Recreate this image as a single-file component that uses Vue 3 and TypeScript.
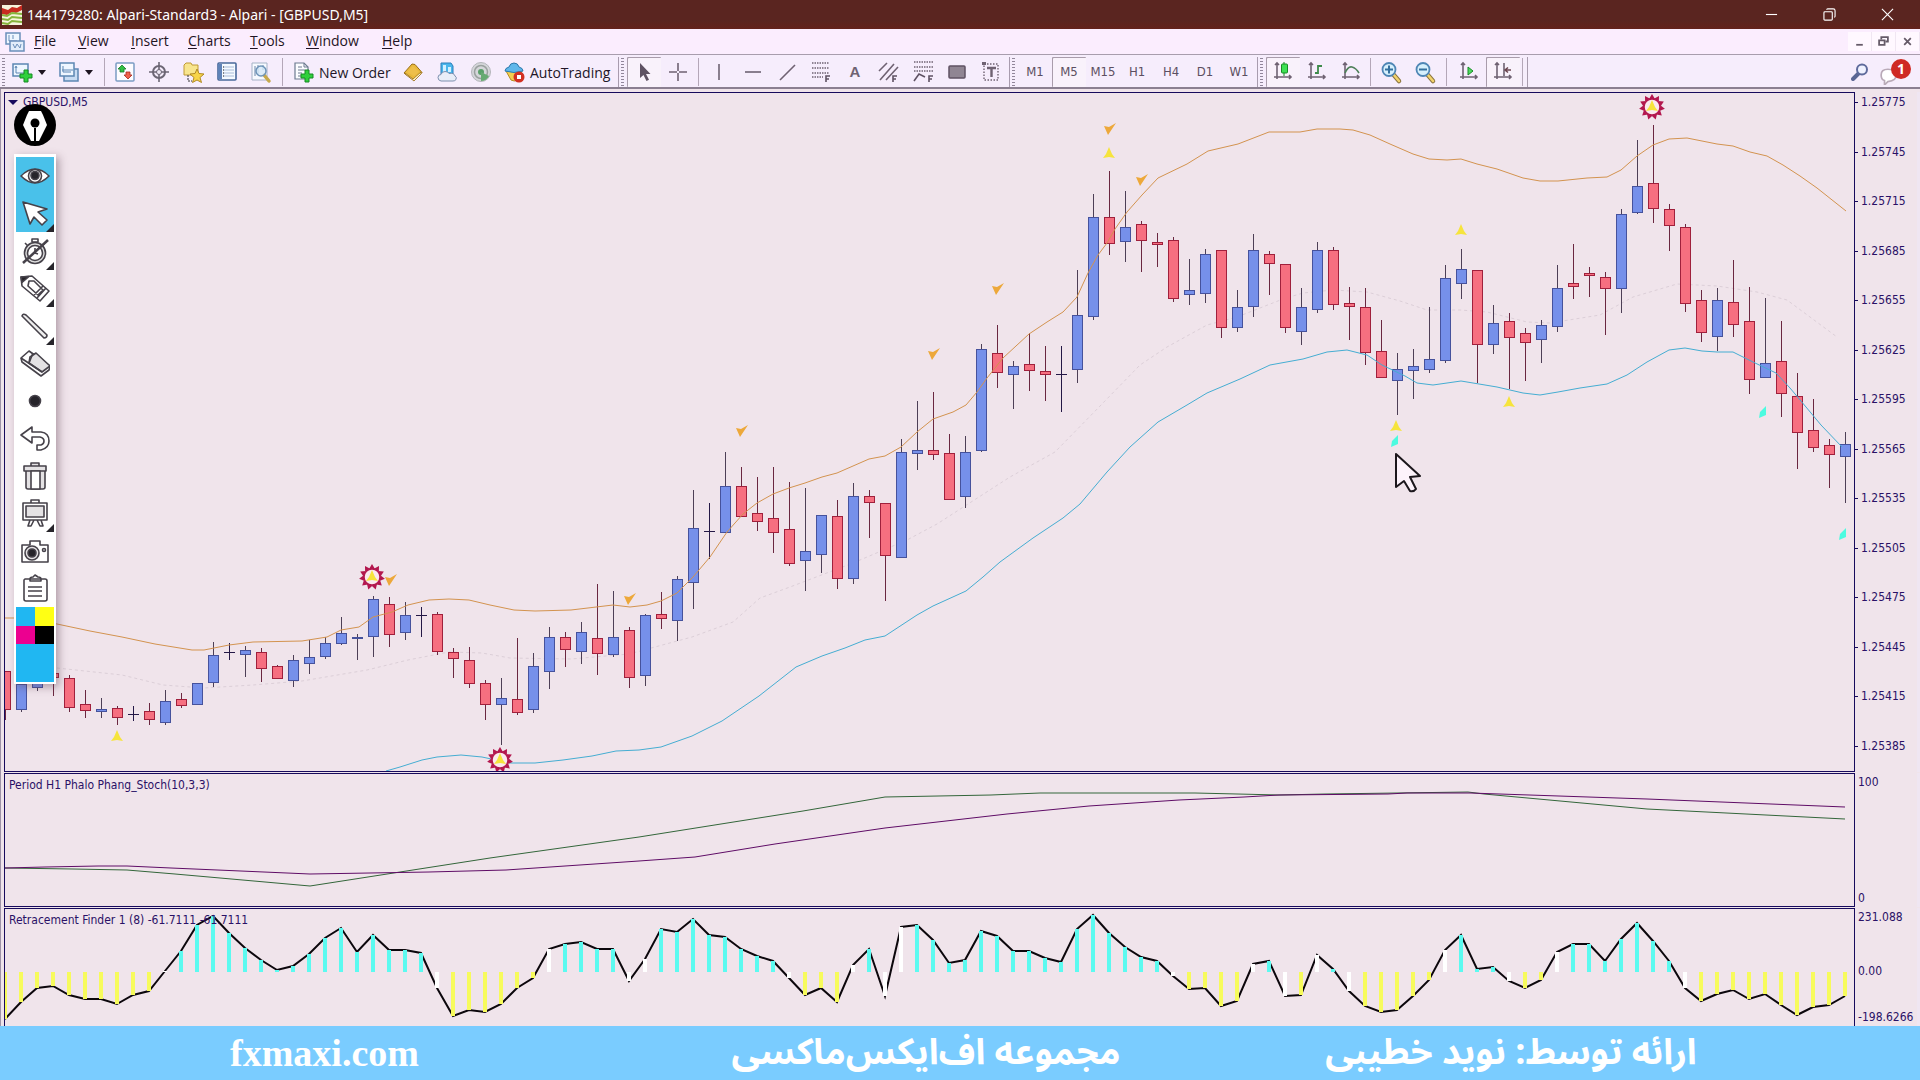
<script setup lang="ts">
interface Candle { x: number; up: boolean; top: number; bottom: number; high: number; low: number; doji: boolean }
interface Tool { id: string; svg?: string; text?: string; label?: string; kind?: 'sep' | 'end' | 'grip'; on?: boolean; cls?: string; drop?: boolean }

const STEP = 16
const ZERO = 972

// up flag, body top, body bottom, high, low
const rawCandles: [number, number, number, number, number][] = [
  [0, 671, 709, 671, 719], [1, 684, 709, 680, 711], [1, 680, 687, 676, 690], [0, 673, 677, 673, 695], [0, 678, 707, 675, 711],
  [0, 704, 710, 690, 717], [1, 709, 711, 698, 717], [0, 708, 717, 706, 724], [1, 714, 714, 706, 720], [0, 711, 719, 703, 724],
  [1, 701, 722, 690, 724], [0, 699, 705, 693, 707], [1, 683, 704, 683, 704], [1, 655, 682, 642, 686], [1, 652, 652, 643, 659],
  [1, 650, 654, 646, 676], [0, 652, 668, 648, 681], [0, 666, 678, 665, 678], [1, 660, 680, 655, 686], [1, 657, 663, 640, 673],
  [1, 643, 656, 637, 658], [1, 633, 643, 617, 644], [1, 637, 638, 634, 659], [1, 599, 636, 596, 656], [0, 604, 634, 597, 646],
  [1, 615, 632, 602, 639], [1, 615, 615, 607, 636], [0, 614, 651, 612, 654], [0, 652, 658, 648, 677], [0, 660, 683, 647, 687],
  [0, 683, 704, 680, 719], [1, 698, 704, 678, 744], [0, 699, 712, 638, 714], [1, 666, 709, 653, 712], [1, 637, 671, 627, 688],
  [0, 637, 649, 632, 666], [1, 632, 651, 622, 663], [0, 638, 653, 584, 674], [1, 637, 654, 591, 656], [0, 630, 677, 627, 687],
  [1, 615, 675, 614, 685], [0, 614, 618, 592, 628], [1, 579, 620, 576, 640], [1, 528, 582, 490, 608], [1, 531, 531, 503, 558],
  [1, 486, 532, 452, 532], [0, 486, 516, 467, 516], [0, 513, 521, 477, 530], [0, 518, 532, 467, 552], [0, 529, 563, 482, 565],
  [1, 551, 560, 488, 590], [1, 515, 554, 515, 572], [0, 516, 578, 500, 588], [1, 496, 578, 483, 583], [0, 496, 502, 490, 537],
  [0, 503, 555, 503, 600], [1, 452, 557, 439, 557], [1, 450, 453, 401, 469], [0, 450, 454, 392, 459], [0, 453, 499, 434, 499],
  [1, 452, 496, 436, 507], [1, 349, 450, 344, 451], [0, 353, 372, 325, 387], [1, 366, 374, 361, 408], [0, 364, 370, 333, 390],
  [0, 371, 374, 346, 400], [1, 374, 374, 346, 411], [1, 315, 369, 270, 382], [1, 217, 316, 194, 319], [0, 217, 243, 171, 254],
  [1, 227, 241, 191, 261], [0, 224, 240, 221, 271], [0, 242, 244, 233, 266], [0, 240, 298, 237, 301], [1, 290, 294, 259, 304],
  [1, 254, 293, 249, 302], [0, 250, 327, 250, 337], [1, 307, 327, 290, 331], [1, 250, 306, 234, 316], [0, 254, 263, 251, 294],
  [0, 264, 327, 264, 332], [1, 307, 331, 288, 344], [1, 250, 309, 242, 312], [0, 250, 304, 247, 309], [0, 303, 306, 287, 339],
  [0, 307, 352, 288, 364], [0, 351, 377, 320, 377], [1, 369, 380, 353, 414], [1, 366, 370, 349, 398], [1, 359, 369, 307, 372],
  [1, 278, 360, 265, 362], [1, 269, 283, 249, 298], [0, 270, 344, 270, 382], [1, 323, 344, 305, 353], [0, 321, 337, 313, 388],
  [0, 333, 342, 328, 380], [1, 325, 339, 320, 362], [1, 288, 326, 265, 331], [0, 283, 286, 244, 298], [0, 273, 275, 267, 296],
  [0, 277, 288, 272, 334], [1, 214, 288, 209, 312], [1, 186, 212, 140, 213], [0, 183, 208, 125, 222], [0, 209, 225, 204, 250],
  [0, 227, 303, 224, 311], [0, 300, 332, 290, 341], [1, 300, 336, 288, 350], [0, 302, 324, 260, 336], [0, 321, 379, 287, 393],
  [1, 363, 377, 298, 377], [0, 361, 393, 321, 416], [0, 396, 432, 373, 468], [0, 430, 447, 399, 451], [0, 445, 454, 439, 487],
  [1, 444, 456, 432, 502],
]
const candles: Candle[] = rawCandles.map(([up, top, bottom, high, low], i) => ({
  x: 5 + i * STEP, up: up === 1, top, bottom, high, low, doji: top === bottom,
}))

const upperBand = '5,618 27,618 57,624 90,631 122,637 155,644 192,650 204,650 229,645 253,642 302,641 327,637 341,630 359,627 373,617 392,612 408,605 429,600 449,599 469,600 490,605 514,610 535,611 571,610 613,605 630,607 647,605 661,601 677,593 693,577 710,557 727,532 743,514 757,503 773,494 789,488 805,483 822,477 837,473 869,459 885,456 901,447 917,432 933,419 953,412 966,405 977,392 987,378 1003,358 1029,334 1047,322 1063,312 1077,297 1088,273 1098,255 1107,243 1115,229 1127,212 1142,195 1158,178 1187,164 1208,151 1238,144 1269,132 1300,132 1317,129 1340,129 1353,130 1370,135 1390,144 1413,154 1429,159 1447,160 1461,159 1477,164 1497,169 1523,178 1540,181 1558,181 1587,178 1607,177 1621,170 1637,156 1653,145 1669,139 1687,138 1717,144 1733,146 1750,152 1767,156 1783,165 1800,176 1817,188 1846,211'
const lowerBand = '386,771 400,767 422,760 437,757 461,755 482,757 510,763 535,763 563,760 592,756 616,751 639,750 661,747 692,736 722,721 759,696 796,667 822,656 845,648 865,640 885,636 917,615 933,606 966,591 983,577 1000,562 1033,538 1063,518 1080,504 1107,472 1130,447 1158,422 1187,405 1207,393 1240,379 1270,365 1303,359 1327,352 1347,350 1367,355 1382,365 1405,376 1417,383 1433,385 1461,381 1497,387 1523,393 1540,395 1558,392 1580,388 1607,384 1627,375 1647,362 1669,350 1685,348 1702,351 1717,352 1733,352 1753,362 1776,373 1790,388 1806,407 1821,425 1842,447'
const middleBand = '57,668 122,675 163,685 204,688 253,685 302,681 367,670 408,660 449,652 482,653 510,658 571,659 629,654 692,637 733,622 760,598 790,587 853,563 907,540 937,524 1010,477 1055,452 1103,403 1140,365 1167,347 1207,325 1237,317 1283,299 1303,293 1333,290 1367,292 1400,301 1427,310 1460,310 1487,312 1527,322 1550,323 1600,315 1633,297 1677,284 1717,286 1757,292 1787,300 1837,337'
const stochMain = '5,868 73,869 127,870 175,874 310,886 400,872 490,858 639,837 803,811 885,797 991,795 1040,793 1195,793 1279,795 1325,794 1468,792 1484,794 1647,809 1845,819'
const stochSignal = '5,868 45,867 98,866 127,866 171,868 310,874 429,872 506,870 639,861 695,857 775,844 885,828 1007,814 1089,806 1179,800 1244,797 1279,795 1388,794 1407,793 1470,793 1647,799 1845,807'

const retrace = [
  1019, 1002, 988, 986, 995, 999, 999, 1004, 995, 991, 971, 951, 925, 916, 933, 948, 960, 970, 966, 954, 938, 928, 952, 935, 950,
  950, 953, 988, 1016, 1010, 1012, 1004, 988, 978, 949, 944, 942, 949, 949, 981, 959, 929, 932, 919, 935, 937, 949, 956, 961, 978,
  995, 988, 1002, 965, 949, 996, 927, 925, 940, 963, 960, 931, 936, 951, 951, 958, 962, 929, 915, 933, 947, 957, 961, 976, 989,
  988, 1006, 1001, 964, 961, 996, 995, 955, 969, 991, 1006, 1012, 1010, 996, 980, 950, 935, 969, 967, 981, 988, 980, 952, 944, 944,
  961, 939, 923, 941, 961, 988, 1001, 994, 990, 999, 994, 1005, 1015, 1007, 1005, 996,
]
const retraceLine = retrace.map((y, i) => `${5 + i * STEP},${y}`).join(' ')
const retraceBars = retrace.map((y, i) => {
  const above = y < ZERO
  const turned = i > 0 && (retrace[i - 1] < ZERO) !== above
  return { x: 3 + i * STEP, y: Math.min(y, ZERO), h: Math.abs(y - ZERO), cls: turned ? 'turn' : above ? 'pos' : 'neg' }
})

const prices = Array.from({ length: 14 }, (_, i) => (1.25775 - i * 0.0003).toFixed(5))
const yellowMarks = [[117, 736], [372, 576], [500, 759], [1109, 153], [1461, 230], [1652, 106], [1396, 426], [1509, 402]]
const orangeMarks = [[390, 580], [629, 599], [741, 431], [933, 354], [997, 289], [1109, 129], [1141, 180]]
const cyanMarks = [[1395, 441], [1763, 412], [1843, 534]]
const stars = [[372, 577], [500, 760], [1652, 107]]
const spikes = Array.from({ length: 11 }, (_, i) => (i * 360) / 11)

const menus = ['File', 'View', 'Insert', 'Charts', 'Tools', 'Window', 'Help']

const axes = '<path d="M4 1v16M1 15h17M2 3l2-2 2 2M16 13l2 2-2 2" fill="none" stroke="#6f6272" stroke-width="1.6"/>'
const plus = '<path d="M12 8h4v4h4v4h-4v4h-4v-4H8v-4h4z" fill="#2fd03c" stroke="#178a25" stroke-width="1"/>'
const lens = (sign: string) => `<path d="M12 12l6 7" stroke="#8a7440" stroke-width="4.5" stroke-linecap="round"/><path d="M12.500 12.500l5.500 6.500" stroke="#f3d36b" stroke-width="2.500" stroke-linecap="round"/><circle cx="8" cy="7.500" r="6.500" fill="#d6f0fc" stroke="#4f86b5" stroke-width="1.800"/><path d="${sign}" stroke="#34719f" stroke-width="2"/>`

const tools: Tool[] = [
  { id: 'g1', kind: 'grip' },
  { id: 'new', label: 'New chart', drop: true, cls: 'drop', svg: '<path d="M1 2h15v12H1z" fill="#eef6ff" stroke="#5c86b3" stroke-width="1.500"/><path d="M4 5v6h8M3 6l1-2 1 2" fill="none" stroke="#5c86b3"/>' + plus },
  { id: 'prof', label: 'Profiles', drop: true, cls: 'drop', svg: '<path d="M5 7h14v12H5z" fill="#c8dcf3" stroke="#5c86b3" stroke-width="1.500"/><path d="M1 1h14v13H1z" fill="#eef6ff" stroke="#5c86b3" stroke-width="1.500"/><path d="M4 4v6h8M3 8h11" fill="none" stroke="#5c86b3"/>' },
  { id: 's1', kind: 'sep', cls: 'near' },
  { id: 'mw', label: 'Market Watch', svg: '<rect x="1" y="1" width="18" height="18" rx="1" fill="#fdfcff" stroke="#7b9cc4" stroke-width="1.500"/><path d="M7 3l4 4H9v3H5V7H3z" fill="#30c043" stroke="#18792a" stroke-width=".8"/><path d="M13 17l4-4h-2v-3h-4v3H9z" fill="#f0604a" stroke="#a82a1c" stroke-width=".8"/>' },
  { id: 'dw', label: 'Data Window', svg: '<circle cx="10" cy="10" r="6" fill="none" stroke="#6c6674" stroke-width="2"/><path d="M10 0v20M0 10h20" stroke="#6c6674" stroke-width="1.600"/><circle cx="10" cy="10" r="2.500" fill="#efe8f4" stroke="#6c6674"/>' },
  { id: 'nav', label: 'Navigator', svg: '<path d="M1 3l2-2h5l1 2h6v10H1z" fill="#f8e58e" stroke="#c09a35"/><path d="M5 13v6h4" fill="none" stroke="#333" stroke-dasharray="2 1"/><path d="M14 7l2 4.500 5 .5-4 3.500 1.500 5L14 18l-4.500 2.500 1.500-5L7 12l5-.5z" fill="#f7d449" stroke="#b18a24"/>' },
  { id: 'term', label: 'Terminal', svg: '<rect x="1" y="1" width="18" height="17" rx="1" fill="#f5faff" stroke="#49699b" stroke-width="1.600"/><path d="M1 2h4v15H1z" fill="#5f83b8"/><path d="M7 5h10M7 8h10M7 11h10M7 14h10" stroke="#a9bcd8"/><path d="M6 5h1M6 8h1M6 11h1M6 14h1" stroke="#111"/>' },
  { id: 'test', label: 'Strategy Tester', svg: '<path d="M1 1h15v17H1z" fill="#f7faff" stroke="#a5b2c6"/><path d="M4 4v10M7 3v9M12 3v5" stroke="#6a86a8"/><path d="M13 13l5 6" stroke="#c6a94c" stroke-width="3.500" stroke-linecap="round"/><circle cx="10" cy="9" r="5" fill="#d5e9f8cc" stroke="#6d93b8" stroke-width="1.500"/>' },
  { id: 's2', kind: 'sep' },
  { id: 'order', text: 'New Order', cls: 'order', svg: '<path d="M2 1h9l4 4v12H2z" fill="#fbfcff" stroke="#6d7b90" stroke-width="1.200"/><path d="M11 1v4h4M5 5h4M5 8h7M5 11h4M5 14h3" fill="none" stroke="#6d7b90"/>' + plus },
  { id: 'gold', label: 'MetaEditor', svg: '<path d="M1 11L9 2l3 .5 7 8-8 8z" fill="#e9b93c" stroke="#9a6f16"/><path d="M2 11l8 6 8-7v2l-7 7-9-7z" fill="#fff1c4" stroke="#9a6f16" stroke-width=".8"/><path d="M4 10l6-6 6 6-5 4z" fill="#eebf4a"/>' },
  { id: 'cloud', label: 'Cloud', svg: '<path d="M4 1h10l2 3v8H4z" fill="#4bb6ec" stroke="#2d7fba"/><path d="M6 3h3v8H6zM11 5h3v5h-3z" fill="#d2f0ff"/><path d="M4 19q-3-.5-3-3.500t3-3q1-3 4-3t4 2q5-1 6 2.500 2 1 1 3.500-1 1.500-3 1.500z" fill="#e9eef8" stroke="#7d8fae"/>' },
  { id: 'sig', label: 'Signals', svg: '<circle cx="10" cy="10" r="9.500" fill="#d5d6da" stroke="#b3b5ba"/><circle cx="10" cy="10" r="6.500" fill="none" stroke="#9aa09f" stroke-width="1.500"/><circle cx="10" cy="10" r="3" fill="#5aa06a"/><path d="M10 10v9a9 9 0 0 0 8-5z" fill="#67aa73"/>' },
  { id: 'auto', text: 'AutoTrading', cls: 'auto', svg: '<path d="M2 9h16l-4 9q-4 2-7 0z" fill="#f3cf4f" stroke="#b58b22"/><path d="M1 9q0-3 4-4 1-4 5-4t5 4q4 1 4 4-9 3-18 0z" fill="#5fb7ea" stroke="#2d78ab"/><circle cx="15" cy="15" r="5.500" fill="#d22f22"/><rect x="13" y="13" width="4" height="4" fill="#fff"/>' },
  { id: 'e1', kind: 'end' }, { id: 'g2', kind: 'grip' },
  { id: 'cur', label: 'Cursor', on: true, svg: '<path d="M6 1v15l3.500-3 3 6 2.500-1.200-3-5.800h4.500z" fill="#5f5263"/>' },
  { id: 'cross', label: 'Crosshair', svg: '<path d="M10 1v8M10 11v8M1 10h8M11 10h8" stroke="#6f6272" stroke-width="1.600"/>' },
  { id: 's3', kind: 'sep', cls: 'mid' },
  { id: 'vl', label: 'Vertical Line', svg: '<path d="M10 2v16" stroke="#6f6272" stroke-width="1.600"/>' },
  { id: 'hl', label: 'Horizontal Line', svg: '<path d="M2 10h16" stroke="#6f6272" stroke-width="1.600"/>' },
  { id: 'tl', label: 'Trendline', svg: '<path d="M3 18L18 3" stroke="#6f6272" stroke-width="1.600"/>' },
  { id: 'fib', label: 'Fibonacci', svg: '<path d="M1 1h17M1 6h17M1 11h17M1 15h11" stroke="#6f6272" stroke-dasharray="1.500 1" stroke-width="1.500"/><path d="M15 20v-6h4M15 17h3" fill="none" stroke="#5f5263" stroke-width="1.600"/>' },
  { id: 'A', text: 'A', cls: 'letter', label: 'Text' },
  { id: 'ch', label: 'Channel', svg: '<path d="M0 9l8-8M1 18L15 2M7 18L19 5" stroke="#6f6272" stroke-width="1.600"/><path d="M14 20v-6h4M14 17h3" fill="none" stroke="#5f5263" stroke-width="1.600"/>' },
  { id: 'gann', label: 'Fibo Expansion', svg: '<path d="M1 0h19M1 5h19M1 9h19" stroke="#6f6272" stroke-dasharray="1.500 1" stroke-width="1.500"/><path d="M1 19l5-7 6 3M16 20v-6h4M16 17h3" fill="none" stroke="#5f5263" stroke-width="1.600"/>' },
  { id: 'rect', label: 'Rectangle', svg: '<rect x="2" y="4" width="16" height="12" rx="1" fill="#908593" stroke="#5f5263" stroke-width="1.500"/>' },
  { id: 'lbl', label: 'Text Label', svg: '<rect x="3" y="2" width="14" height="16" fill="none" stroke="#6f6272" stroke-dasharray="1.500 1.500" stroke-width="1.400"/><path d="M6 6h9M10.500 6v9" stroke="#6f6272" stroke-width="2.400"/><path d="M1 0h4v3H1z" fill="#6f6272"/>' },
  { id: 'e2', kind: 'end', cls: 'tight' }, { id: 'g3', kind: 'grip' },
  ...['M1', 'M5', 'M15', 'H1', 'H4', 'D1', 'W1'].map((t): Tool => ({ id: 'tf' + t, text: t, cls: 'tf', on: t === 'M5' })),
  { id: 'e3', kind: 'end', cls: 'tight' }, { id: 'g4', kind: 'grip' },
  { id: 'candle', label: 'Candlesticks', on: true, svg: axes + '<path d="M11 0v14" stroke="#178a25"/><rect x="8.500" y="2" width="6" height="9" rx="1" fill="#3ee053" stroke="#178a25"/>' },
  { id: 'bars', label: 'Bar Chart', svg: axes + '<path d="M11 3v9M11 4h4M8 11h3" fill="none" stroke="#3d8a4a" stroke-width="1.800"/>' },
  { id: 'line', label: 'Line Chart', svg: axes + '<path d="M4 11q3-7 7-6t7 6" fill="none" stroke="#4e8059" stroke-width="1.600"/>' },
  { id: 's4', kind: 'sep', cls: 'near' },
  { id: 'zi', label: 'Zoom In', svg: lens('M4 7.500h8M8 3.500v8') },
  { id: 'zo', label: 'Zoom Out', svg: lens('M4 7.500h8') },
  { id: 's5', kind: 'sep', cls: 'wide' },
  { id: 'as', label: 'Auto Scroll', svg: axes + '<path d="M9 5v8l5-4z" fill="#4fdc60" stroke="#178a25"/>' },
  { id: 'cs', label: 'Chart Shift', on: true, svg: axes + '<path d="M11 1v13" stroke="#6f6272" stroke-width="1.600"/><path d="M18 8h-5M15 5.500l-3 2.500 3 2.500" fill="none" stroke="#6b4650" stroke-width="1.600"/>' },
  { id: 's6', kind: 'sep', cls: 'near' }, { id: 'e4', kind: 'end', cls: 'tight' },
]

const draws: { id: string; on?: boolean; more?: boolean; svg: string }[] = [
  { id: 'Show', on: true, svg: '<path d="M1 15Q15 1 29 15 15 29 1 15z" fill="#fff"/><circle cx="15" cy="15" r="6.500" fill="#fff"/><circle cx="15" cy="14.500" r="4" fill="#26242a"/>' },
  { id: 'Pointer', on: true, more: true, svg: '<path d="M3 4l24 7-9 3 9 8-5 5-8-8-4 7z" fill="#fff"/>' },
  { id: 'Timer', more: true, svg: '<circle cx="15" cy="17" r="10.500" fill="#ddd"/><circle cx="15" cy="17" r="7.500" fill="#fff"/><path d="M12 3h6v3h-6zM5 7l3 3M25 7l-3 3M15 12v5l3 1"/><path d="M3 27L28 4" stroke-width="2.500"/>' },
  { id: 'Pencil', more: true, svg: '<path d="M1 4l11-1 17 15-9 10L2 13z" fill="#fff"/><path d="M1 4l8-.5-7 6z" fill="#26242a"/><path d="M9 8h5l9 9-5 5L8 13zM26 15l-9 10M23 13l-9 9" fill="#fff"/>' },
  { id: 'Line', more: true, svg: '<path d="M2 5q1-3 4-1l21 20q0 3-3 3z" fill="#eee"/>' },
  { id: 'Eraser', svg: '<path d="M1 10l8-7 21 15-1 4-8 6L2 14z" fill="#fff"/><path d="M10 9l6-4 14 13-8 6-13-9z" fill="#e4e2e4"/><path d="M1 10l21 14M9 15l4-10"/>' },
  { id: 'Size', svg: '<circle cx="15" cy="15" r="5.500" fill="#26242a"/>' },
  { id: 'Undo', svg: '<path d="M1 12L12 4v5h9q8 1 8 9 0 7-8 9h-4v-5h4q3-1 3-4t-4-4h-8v6z" fill="#fff"/>' },
  { id: 'Clear', svg: '<path d="M6 10h19v16q0 2-2 2H8q-2 0-2-2zM4 5h22v5H4zM11 2h8v3h-8z" fill="#e4e2e4"/><path d="M11 10h9v18h-9z" fill="#fff"/>' },
  { id: 'Board', more: true, svg: '<path d="M3 5h24v17H3zM11 2h8v3h-8zM10 22l-2 6h3l3-6M17 22l3 6h3l-2-6" fill="#fff"/><path d="M6 8h18v11H6z" fill="#e4e2e4"/>' },
  { id: 'Camera', svg: '<path d="M2 9h8V5h10v4h8v17H2z" fill="#fff"/><circle cx="12" cy="17" r="7" fill="#e4e2e4"/><circle cx="12" cy="17" r="4" fill="#26242a"/><circle cx="24" cy="14" r="1.500"/>' },
  { id: 'Pages', svg: '<path d="M5 6h20q2 0 2 2v18q0 2-2 2H6q-2 0-2-2V7zM10 6q0-2 3-2l2-2 3 2q3 0 3 2v2H10z" fill="#fff"/><path d="M8 14h14M8 18h14M8 23h14"/>' },
]
</script>

<template>
  <div class="app">
    <header class="titlebar">
      <svg class="logo" viewBox="0 0 20 20"><path d="M0 0h20v20H0z" fill="#f6f4dc" /><path d="M0 3l6 2 4-3 5 1 5-3v5l-6 3-4-1-5 3-5-1z" fill="#c72b20" /><path d="M0 10l5 1 5-3 10 1M0 14l6 1 4-3 10 1M0 18l6 1 4-3 10 1" fill="none" stroke="#86b43c" stroke-width="2" /></svg>
      <h1>144179280: Alpari-Standard3 - Alpari - [GBPUSD,M5]</h1>
      <div class="winctl">
        <button aria-label="Minimize"><svg viewBox="0 0 14 14"><path d="M1 7h12" /></svg></button>
        <button aria-label="Restore"><svg viewBox="0 0 14 14"><rect x="1" y="4" width="9" height="9" rx="1" /><path d="M4 2q0-1 1-1h6q2 0 2 2v6q0 1-1 1" /></svg></button>
        <button aria-label="Close"><svg viewBox="0 0 14 14"><path d="M1 1l12 12M13 1L1 13" /></svg></button>
      </div>
    </header>

    <nav class="menubar">
      <svg class="menuicon" viewBox="0 0 20 20"><path d="M1 1h14v11H1z" fill="#eef6ff" stroke="#6b8fba" stroke-width="1.500" /><path d="M4 3v6h8M8 3v4" fill="none" stroke="#6b8fba" /><path d="M5 9h14v10H5z" fill="#e3eefb" stroke="#6b8fba" stroke-width="1.500" /><path d="M8 12l2 4 2-4 3 4 1-4" fill="none" stroke="#6b8fba" /></svg>
      <button v-for="m in menus" :key="m" class="menu" :class="m.toLowerCase()"><u>{{ m[0] }}</u>{{ m.slice(1) }}</button>
      <div class="mdi">
        <button aria-label="Minimize chart"><svg viewBox="0 0 10 10"><path d="M2 8h6" /></svg></button>
        <button aria-label="Restore chart"><svg viewBox="0 0 10 10"><path d="M3 3V1h6v4H7M1 4h5v4H1z" /></svg></button>
        <button aria-label="Close chart"><svg viewBox="0 0 10 10"><path d="M2 2l6 6M8 2L2 8" /></svg></button>
      </div>
    </nav>

    <div class="toolbar">
      <template v-for="t in tools" :key="t.id">
        <span v-if="t.kind" :class="[t.kind, t.cls]"></span>
        <button v-else class="tool" :class="[t.cls, { on: t.on }]" :aria-label="t.label || t.text">
          <svg v-if="t.svg" viewBox="0 0 20 20" v-html="t.svg"></svg>
          <span v-if="t.text">{{ t.text }}</span>
          <i v-if="t.drop" class="caret"></i>
        </button>
      </template>
      <div class="status">
        <button aria-label="Search"><svg class="search" viewBox="0 0 18 18"><path d="M2 16l6-6" stroke="#5b6694" stroke-width="4" stroke-linecap="round" /><circle cx="11" cy="6.500" r="5" fill="#f0f2ff" stroke="#5f6b9c" stroke-width="2" /></svg></button>
        <button class="alerts" aria-label="Notifications"><svg viewBox="0 0 16 16"><path d="M1 7q0-5 6-5t7 5-7 6l-3 3v-4q-3-1-3-5z" fill="#fff" stroke="#b9aab8" stroke-width="1.500" /></svg><b>1</b></button>
      </div>
    </div>

    <main class="charts">
      <section class="pane">
        <svg class="plot" viewBox="5 93 1849 678" preserveAspectRatio="none">
          <polyline class="mid" :points="middleBand" />
          <g v-for="c in candles" :key="c.x" :class="c.doji ? 'doji' : c.up ? 'up' : 'down'">
            <rect class="wick" :x="c.x" :y="c.high" width="1" :height="c.low - c.high + 1" />
            <rect v-if="c.doji" class="wick" :x="c.x - 5" :y="c.top" width="11" height="1" />
            <rect v-else class="body" :x="c.x - 4.5" :y="c.top + 0.5" width="10" :height="c.bottom - c.top" />
          </g>
          <polyline class="upper" :points="upperBand" />
          <polyline class="lower" :points="lowerBand" />
          <g v-for="s in stars" :key="s[0]" :transform="`translate(${s[0]} ${s[1]})`">
            <path v-for="a in spikes" :key="a" :transform="`rotate(${a})`" d="M-3-8L0-13 3-8z" fill="#b3174e" />
            <circle r="8" fill="#fbe9ee" stroke="#b3174e" stroke-width="1.5" />
          </g>
          <path v-for="m in yellowMarks" :key="m[0]" :transform="`translate(${m[0]} ${m[1]})`" d="M0-6L3 1 6 5 0 4-6 5-3 1z" fill="#f6e43c" />
          <path v-for="m in orangeMarks" :key="m[0]" :transform="`translate(${m[0]} ${m[1]})`" d="M-1 6L-5-3 0-2 7-6z" fill="#eda83a" />
          <path v-for="m in cyanMarks" :key="m[0]" :transform="`translate(${m[0]} ${m[1]})`" d="M-4 6L-3 0 3-6 3 3z" fill="#4cfbe0" />
          <path transform="translate(1396 453)" d="M0 1L0 34 8 28 14 38Q18 39 20 36L14 24 24 23z" fill="#fdf3fb" stroke="#1c171c" stroke-width="2" stroke-linejoin="round" />
        </svg>
        <h2 class="symbol">GBPUSD,M5</h2>
      </section>
      <div class="axis prices"><span v-for="p in prices" :key="p">{{ p }}</span></div>

      <section class="pane">
        <svg class="plot" viewBox="5 774 1849 132" preserveAspectRatio="none">
          <polyline class="stoch" :points="stochMain" />
          <polyline class="signal" :points="stochSignal" />
        </svg>
        <h2>Period H1 Phalo Phang_Stoch(10,3,3)</h2>
      </section>
      <div class="axis"><span>100</span><span>0</span></div>

      <section class="pane last">
        <svg class="plot" viewBox="5 909 1849 117" preserveAspectRatio="none">
          <polyline class="retrace" :points="retraceLine" />
          <rect v-for="b in retraceBars" :key="b.x" :class="b.cls" :x="b.x" :y="b.y" width="4" :height="b.h" />
        </svg>
        <h2>Retracement Finder 1 (8) -61.7111 -61.7111</h2>
      </section>
      <div class="axis last"><span>231.088</span><span class="zero">0.00</span><span>-198.6266</span></div>

      <aside class="pen">
        <button class="nib" aria-label="Drawing tools"><svg viewBox="0 0 42 42"><circle cx="21" cy="21" r="21" /><path d="M15 7h12l2 4 4 10-8 16h-3V24h-2v13h-3L9 21l4-10z" fill="#fff" /><circle cx="21" cy="19" r="4.500" /></svg></button>
        <div class="palette">
          <div class="draws">
            <button v-for="d in draws" :key="d.id" :class="{ on: d.on, more: d.more }" :aria-label="d.id"><svg viewBox="0 0 30 30" v-html="d.svg"></svg></button>
          </div>
          <div class="swatches">
            <button class="sky" aria-label="Blue"></button><button class="yellow" aria-label="Yellow"></button>
            <button class="pink" aria-label="Pink"></button><button class="black" aria-label="Black"></button>
            <button class="sky current" aria-label="Current colour"></button>
          </div>
        </div>
      </aside>
    </main>

    <footer class="banner">
      <a href="#" class="site">fxmaxi.com</a>
      <span dir="rtl" lang="fa">مجموعه اف‌ایکس‌ماکسی</span>
      <span dir="rtl" lang="fa">ارائه توسط: نوید خطیبی</span>
    </footer>
  </div>
</template>

<style>
body { margin: 0; }
</style>

<style scoped>
.app { display: flex; flex-direction: column; min-height: 100vh; background: #f0e4eb; font-family: "Open Sans", "Noto Sans", sans-serif; }
button { appearance: none; border: 0; padding: 0; margin: 0; background: none; font: inherit; color: inherit; }
h1, h2 { margin: 0; font-weight: 400; }

.titlebar { display: flex; align-items: center; height: 29px; background: linear-gradient(#5a2520 70%, #63221b); color: #fff; }
.logo { width: 20px; height: 20px; margin-left: 2px; }
h1 { margin-left: 5px; font: 14px/20px "Noto Sans", sans-serif; }
.winctl { display: flex; margin-left: auto; margin-right: 4px; }
.winctl button { display: flex; justify-content: center; width: 58px; }
.winctl svg { width: 13px; height: 13px; fill: none; stroke: #fff; stroke-width: 1.2; }

.menubar { display: flex; align-items: center; height: 25px; background: #fbedfe; color: #1f1424; }
.menuicon { width: 20px; height: 20px; margin-left: 5px; margin-right: 9px; }
.menu { flex: none; padding-bottom: 2px; font-size: 14px; line-height: 20px; text-align: left; white-space: nowrap; }
.file { width: 44px; }
.view { width: 53px; }
.insert { width: 57px; }
.menu.charts { width: 62px; }
.tools { width: 56px; }
.window { width: 76px; }
.help { width: 40px; }
u { text-underline-offset: 2px; }
.mdi { display: flex; margin-left: auto; }
.mdi button { display: flex; align-items: center; justify-content: center; width: 24px; height: 19px; border-right: 1px solid #f0e6f2; background: #fff8ff; }
.mdi svg { width: 11px; height: 11px; fill: none; stroke: #655a68; stroke-width: 1.6; }

.toolbar { display: flex; align-items: center; height: 30px; padding-top: 2px; border-top: 1px solid #a89dad; border-bottom: 2px solid #8b7f91; background: #f6edfc; color: #221628; }
.tool { display: flex; flex: none; align-items: center; justify-content: center; width: 34px; height: 30px; }
.tool svg { width: 20px; height: 20px; flex: none; overflow: visible; }
.tool.on { box-shadow: inset 1px 1px #a99cab; background: #f9f2fb; border-radius: 1px; }
.tool.drop { width: 47px; justify-content: flex-start; padding-left: 4px; gap: 6px; box-sizing: border-box; }
.caret { border: 4px solid transparent; border-top: 5px solid #1d1420; border-bottom: 0; }
.tool.order { width: 109px; justify-content: flex-start; padding-left: 6px; gap: 6px; box-sizing: border-box; font-size: 14px; white-space: nowrap; }
.tool.auto { width: 117px; justify-content: flex-start; padding-left: 6px; gap: 6px; box-sizing: border-box; font-size: 14px; white-space: nowrap; }
.tool.letter { font: 700 15px/20px "Liberation Sans", sans-serif; color: #6f6272; }
.tool.tf { font: 13px/20px "DejaVu Sans Condensed", "DejaVu Sans", sans-serif; color: #5c4f61; }
.grip { width: 3px; height: 28px; margin: 0 3px 0 2px; flex: none; background: repeating-linear-gradient(#91869a 0 1px, transparent 1px 3px); }
.sep { width: 1px; height: 28px; margin: 0 4px; flex: none; background: #b4a7b8; }
.sep.near { margin: 0 3px 0 2px; }
.sep.mid { margin: 0 3px; }
.sep.wide { margin: 0 5px 0 4px; }
.end { width: 1px; height: 30px; margin-left: 3px; flex: none; background: #a89cae; }
.end.tight { margin-left: 1px; }
.status { display: flex; align-items: center; gap: 11px; margin-left: auto; margin-right: 9px; }
.status button { display: flex; }
.search { width: 18px; height: 18px; }
.alerts { position: relative; width: 31px; height: 26px; align-items: flex-end; }
.alerts svg { width: 18px; height: 18px; }
.alerts b { position: absolute; right: 0; top: 0; width: 20px; height: 20px; border-radius: 50%; background: #cf2a24; color: #fff; font-size: 14px; line-height: 20px; text-align: center; }

main.charts { position: relative; flex: 1; display: grid; grid-template-columns: 1fr 65px; grid-template-rows: 680fr 134fr 118fr; row-gap: 1px; padding: 3px 0 0 3px; border-left: 1px solid #9f93a8; font: 12px/17px "DejaVu Sans Condensed", "DejaVu Sans", sans-serif; color: #2a1166; }
.pane { position: relative; min-height: 0; overflow: hidden; border: 1px solid #170a5c; }
.pane.last { border-bottom: 0; }
.plot { position: absolute; inset: 0; width: 100%; height: 100%; }
h2 { position: relative; padding: 3px 0 0 4px; font-size: 12px; line-height: 17px; }
.symbol { padding: 1px 0 0 18px; }
.symbol::before { content: ""; position: absolute; left: 3px; top: 7px; border: 5px solid transparent; border-top-color: #170a5c; border-bottom: 0; }
.axis { display: flex; flex-direction: column; justify-content: space-between; min-height: 0; padding: 1px 0 0 3px; border-right: 3px solid #efe6f2; box-sizing: border-box; white-space: nowrap; }
.prices { padding: 2px 0 17px; }
.prices span { display: flex; align-items: center; gap: 3px; }
.prices span::before { content: ""; width: 3px; height: 1px; background: #170a5c; }
.zero { margin-top: 8px; }

.plot polyline { fill: none; stroke-width: 1; }
.plot .upper { stroke: #d3934f; }
.plot .lower { stroke: #45add2; }
.plot .mid { stroke: #dccfd8; stroke-dasharray: 3 3; }
.plot .stoch { stroke: #33663a; }
.plot .signal { stroke: #5f0c66; }
.plot .retrace { stroke: #0c070c; stroke-width: 2; }
.up .wick { fill: #4d3f56; }
.up .body { fill: #7690ea; stroke: #46529c; }
.down .wick { fill: #6a2740; }
.down .body { fill: #f66f80; stroke: #a0203c; }
.doji .wick { fill: #241846; }
.pos { fill: #5cfaf0; }
.neg { fill: #f7fb5c; }
.turn { fill: #fff; }

.pen { position: absolute; left: 13px; top: 15px; width: 42px; }
.nib { display: block; width: 42px; height: 42px; margin-bottom: 8px; }
.palette { padding: 3px 2px 2px; background: #fff; box-shadow: 3px 3px 8px #5a405070; }
.draws { display: grid; grid-auto-rows: 1fr; height: 450px; }
.draws button { position: relative; display: flex; align-items: center; justify-content: center; min-height: 0; }
.draws svg { width: 30px; height: 30px; fill: none; stroke: #46424a; stroke-width: 1.6; stroke-linejoin: round; }
.draws .on { background: #49c1ea; }
.more::after { content: ""; position: absolute; right: 0; bottom: 0; border: 4px solid #26242a; border-left-color: transparent; border-top-color: transparent; }
.swatches { display: grid; grid-template-columns: 1fr 1fr; grid-template-rows: 19px 18px 38px; }
.sky { background: #20b7f2; }
.yellow { background: #ffff14; }
.pink { background: #ec0090; }
.black { background: #000; }
.current { grid-column: span 2; }

.banner { display: grid; grid-template-columns: 649fr 554fr 616fr 101fr; align-items: center; justify-items: center; height: 54px; background: #7accff; color: #fff; font: 700 36px/54px "Noto Sans Arabic", "Vazirmatn", "DejaVu Sans", sans-serif; white-space: nowrap; }
.site { color: #fff; text-decoration: none; font: 700 38px/54px "Liberation Serif", serif; }
</style>
